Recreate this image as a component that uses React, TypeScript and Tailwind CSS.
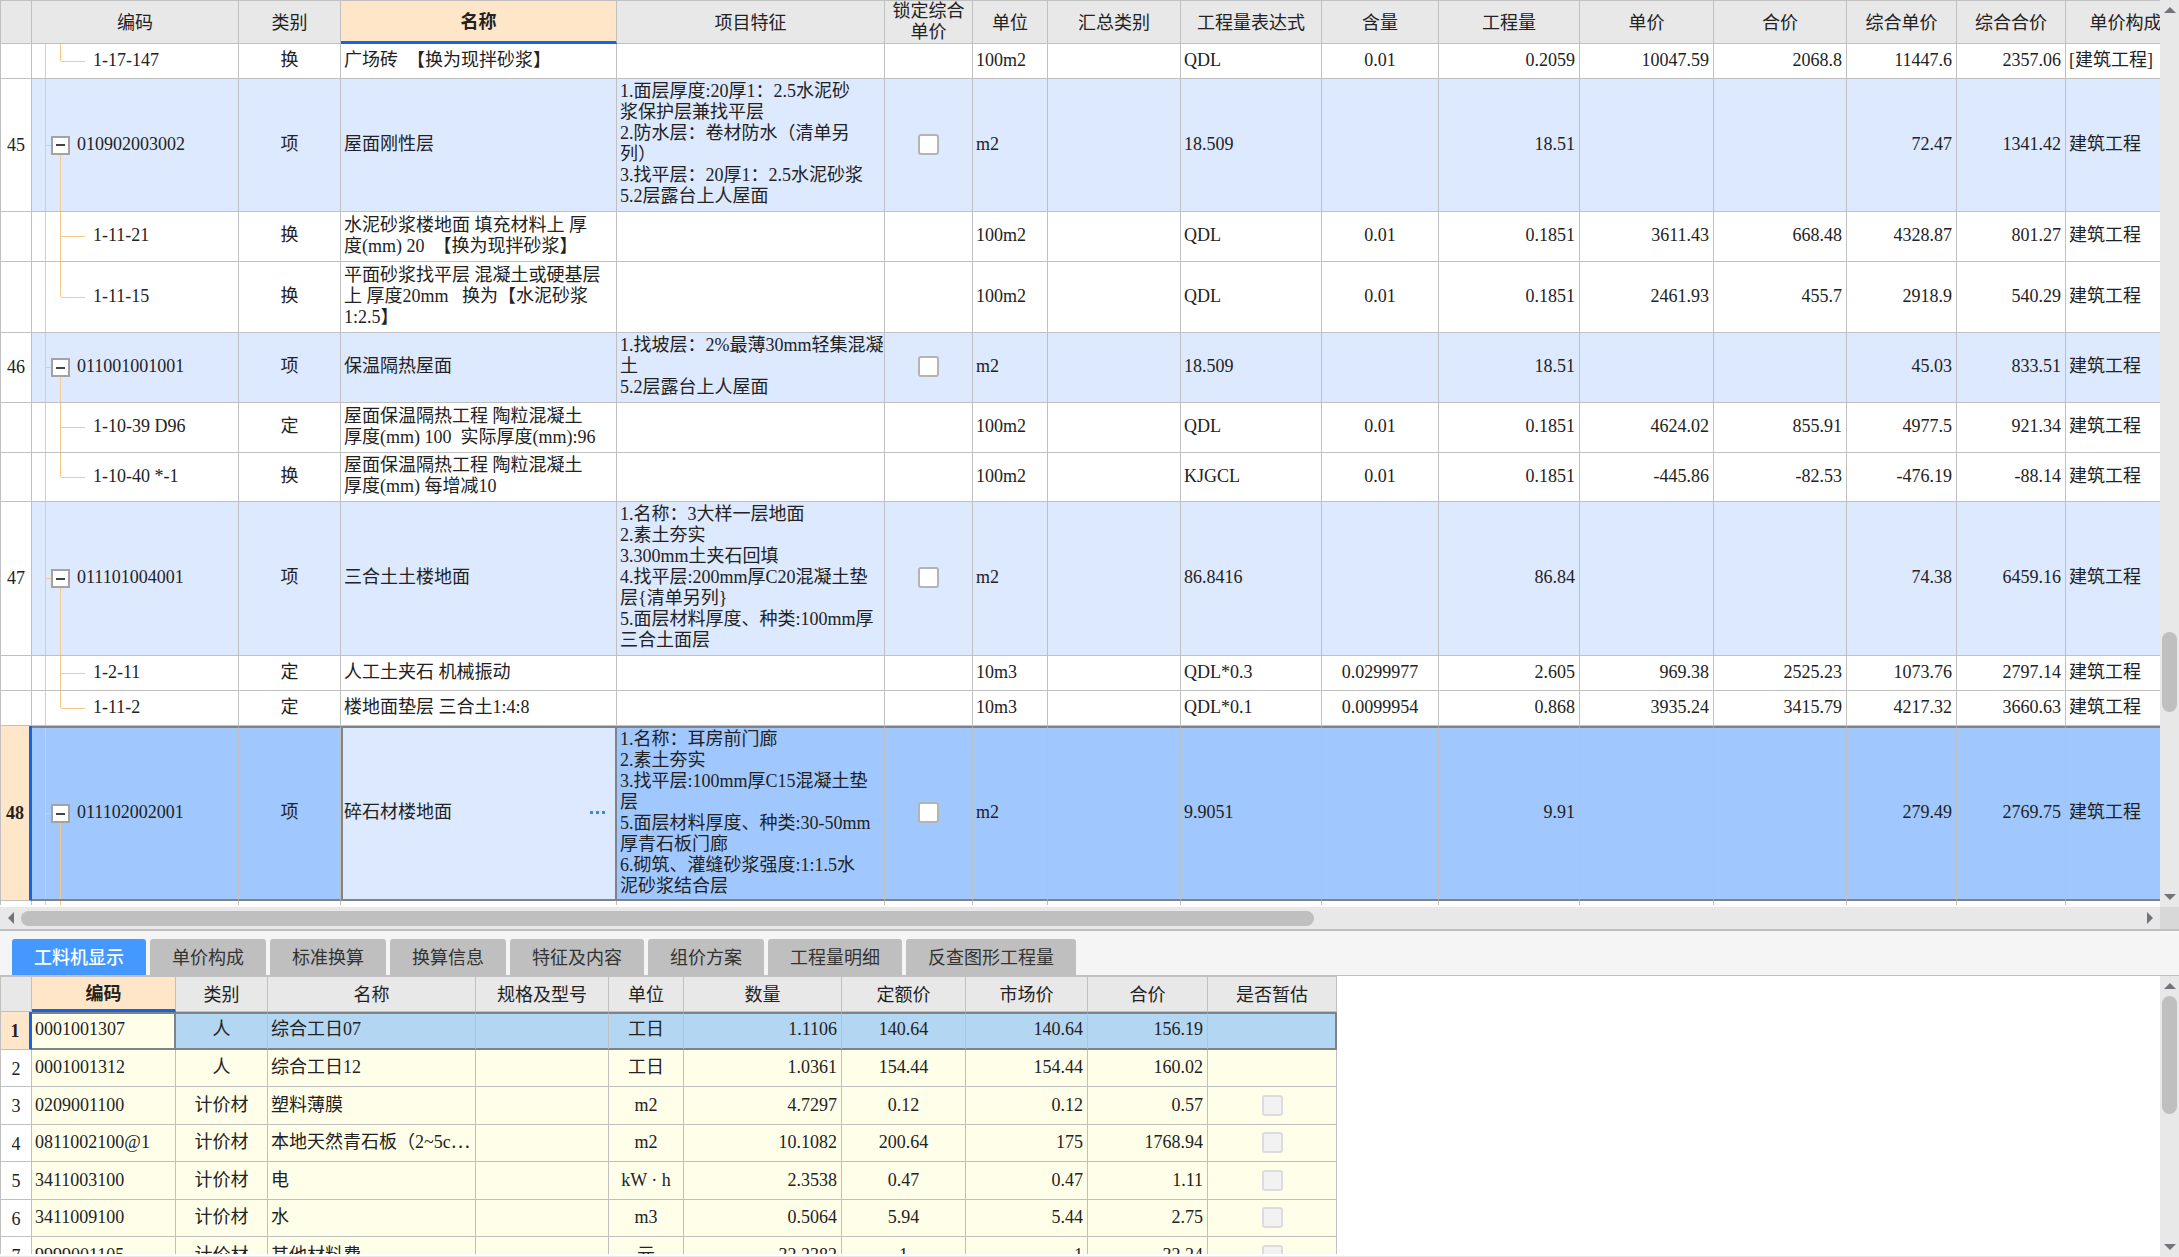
import { useState } from 'react';
import type { ReactNode } from 'react';
import { clsx } from 'clsx';

type Align = 'left' | 'center' | 'right';

interface Column {
  key: string;
  label: string;
  width: string;
  align: Align;
}

interface BillRow {
  no?: string;
  kind: 'item' | 'child' | 'last';
  height: string;
  code: string;
  type: string;
  name: string;
  feature?: string;
  unit: string;
  expr: string;
  content?: string;
  qty: string;
  price?: string;
  total?: string;
  compPrice: string;
  compTotal: string;
  fee: string;
  selected?: boolean;
}

const BILL_COLUMNS: Column[] = [
  { key: 'code', label: '编码', width: 'w-[207px]', align: 'left' },
  { key: 'type', label: '类别', width: 'w-[102px]', align: 'center' },
  { key: 'name', label: '名称', width: 'w-[276px]', align: 'left' },
  { key: 'feature', label: '项目特征', width: 'w-[268px]', align: 'left' },
  { key: 'lock', label: '锁定综合\n单价', width: 'w-[88px]', align: 'center' },
  { key: 'unit', label: '单位', width: 'w-[75px]', align: 'left' },
  { key: 'group', label: '汇总类别', width: 'w-[133px]', align: 'left' },
  { key: 'expr', label: '工程量表达式', width: 'w-[141px]', align: 'left' },
  { key: 'content', label: '含量', width: 'w-[117px]', align: 'center' },
  { key: 'qty', label: '工程量', width: 'w-[141px]', align: 'right' },
  { key: 'price', label: '单价', width: 'w-[134px]', align: 'right' },
  { key: 'total', label: '合价', width: 'w-[133px]', align: 'right' },
  { key: 'compPrice', label: '综合单价', width: 'w-[110px]', align: 'right' },
  { key: 'compTotal', label: '综合合价', width: 'w-[109px]', align: 'right' },
  { key: 'fee', label: '单价构成', width: 'w-[120px]', align: 'left' },
];

const BILL_ROWS: BillRow[] = [
  { kind: 'last', height: 'h-[35px]', code: '1-17-147', type: '换', name: '广场砖  【换为现拌砂浆】', unit: '100m2', expr: 'QDL', content: '0.01', qty: '0.2059', price: '10047.59', total: '2068.8', compPrice: '11447.6', compTotal: '2357.06', fee: '[建筑工程]' },
  { no: '45', kind: 'item', height: 'h-[133px]', code: '010902003002', type: '项', name: '屋面刚性层', feature: '1.面层厚度:20厚1：2.5水泥砂\n浆保护层兼找平层\n2.防水层：卷材防水（清单另\n列）\n3.找平层：20厚1：2.5水泥砂浆\n5.2层露台上人屋面', unit: 'm2', expr: '18.509', qty: '18.51', compPrice: '72.47', compTotal: '1341.42', fee: '建筑工程' },
  { kind: 'child', height: 'h-[50px]', code: '1-11-21', type: '换', name: '水泥砂浆楼地面 填充材料上 厚\n度(mm) 20  【换为现拌砂浆】', unit: '100m2', expr: 'QDL', content: '0.01', qty: '0.1851', price: '3611.43', total: '668.48', compPrice: '4328.87', compTotal: '801.27', fee: '建筑工程' },
  { kind: 'last', height: 'h-[71px]', code: '1-11-15', type: '换', name: '平面砂浆找平层 混凝土或硬基层\n上 厚度20mm   换为【水泥砂浆\n1:2.5】', unit: '100m2', expr: 'QDL', content: '0.01', qty: '0.1851', price: '2461.93', total: '455.7', compPrice: '2918.9', compTotal: '540.29', fee: '建筑工程' },
  { no: '46', kind: 'item', height: 'h-[70px]', code: '011001001001', type: '项', name: '保温隔热屋面', feature: '1.找坡层：2%最薄30mm轻集混凝\n土\n5.2层露台上人屋面', unit: 'm2', expr: '18.509', qty: '18.51', compPrice: '45.03', compTotal: '833.51', fee: '建筑工程' },
  { kind: 'child', height: 'h-[50px]', code: '1-10-39 D96', type: '定', name: '屋面保温隔热工程 陶粒混凝土\n厚度(mm) 100  实际厚度(mm):96', unit: '100m2', expr: 'QDL', content: '0.01', qty: '0.1851', price: '4624.02', total: '855.91', compPrice: '4977.5', compTotal: '921.34', fee: '建筑工程' },
  { kind: 'last', height: 'h-[49px]', code: '1-10-40 *-1', type: '换', name: '屋面保温隔热工程 陶粒混凝土\n厚度(mm) 每增减10', unit: '100m2', expr: 'KJGCL', content: '0.01', qty: '0.1851', price: '-445.86', total: '-82.53', compPrice: '-476.19', compTotal: '-88.14', fee: '建筑工程' },
  { no: '47', kind: 'item', height: 'h-[154px]', code: '011101004001', type: '项', name: '三合土土楼地面', feature: '1.名称：3大样一层地面\n2.素土夯实\n3.300mm土夹石回填\n4.找平层:200mm厚C20混凝土垫\n层{清单另列}\n5.面层材料厚度、种类:100mm厚\n三合土面层', unit: 'm2', expr: '86.8416', qty: '86.84', compPrice: '74.38', compTotal: '6459.16', fee: '建筑工程' },
  { kind: 'child', height: 'h-[35px]', code: '1-2-11', type: '定', name: '人工土夹石 机械振动', unit: '10m3', expr: 'QDL*0.3', content: '0.0299977', qty: '2.605', price: '969.38', total: '2525.23', compPrice: '1073.76', compTotal: '2797.14', fee: '建筑工程' },
  { kind: 'last', height: 'h-[35px]', code: '1-11-2', type: '定', name: '楼地面垫层 三合土1:4:8', unit: '10m3', expr: 'QDL*0.1', content: '0.0099954', qty: '0.868', price: '3935.24', total: '3415.79', compPrice: '4217.32', compTotal: '3660.63', fee: '建筑工程' },
  { no: '48', kind: 'item', height: 'h-[175px]', code: '011102002001', type: '项', name: '碎石材楼地面', feature: '1.名称：耳房前门廊\n2.素土夯实\n3.找平层:100mm厚C15混凝土垫\n层\n5.面层材料厚度、种类:30-50mm\n厚青石板门廊\n6.砌筑、灌缝砂浆强度:1:1.5水\n泥砂浆结合层', unit: 'm2', expr: '9.9051', qty: '9.91', compPrice: '279.49', compTotal: '2769.75', fee: '建筑工程', selected: true },
];

const TABS = ['工料机显示', '单价构成', '标准换算', '换算信息', '特征及内容', '组价方案', '工程量明细', '反查图形工程量'];

const DETAIL_COLUMNS: Column[] = [
  { key: 'code', label: '编码', width: 'w-[144px]', align: 'left' },
  { key: 'type', label: '类别', width: 'w-[92px]', align: 'center' },
  { key: 'name', label: '名称', width: 'w-[208px]', align: 'left' },
  { key: 'spec', label: '规格及型号', width: 'w-[133px]', align: 'left' },
  { key: 'unit', label: '单位', width: 'w-[75px]', align: 'center' },
  { key: 'qty', label: '数量', width: 'w-[158px]', align: 'right' },
  { key: 'quota', label: '定额价', width: 'w-[124px]', align: 'center' },
  { key: 'market', label: '市场价', width: 'w-[122px]', align: 'right' },
  { key: 'total', label: '合价', width: 'w-[120px]', align: 'right' },
  { key: 'estimate', label: '是否暂估', width: 'w-[129px]', align: 'center' },
];

const DETAIL_ROWS = [
  { code: '0001001307', type: '人', name: '综合工日07', unit: '工日', qty: '1.1106', quota: '140.64', market: '140.64', total: '156.19', estimate: false },
  { code: '0001001312', type: '人', name: '综合工日12', unit: '工日', qty: '1.0361', quota: '154.44', market: '154.44', total: '160.02', estimate: false },
  { code: '0209001100', type: '计价材', name: '塑料薄膜', unit: 'm2', qty: '4.7297', quota: '0.12', market: '0.12', total: '0.57', estimate: true },
  { code: '0811002100@1', type: '计价材', name: '本地天然青石板（2~5c⋯', unit: 'm2', qty: '10.1082', quota: '200.64', market: '175', total: '1768.94', estimate: true },
  { code: '3411003100', type: '计价材', name: '电', unit: 'kW · h', qty: '2.3538', quota: '0.47', market: '0.47', total: '1.11', estimate: true },
  { code: '3411009100', type: '计价材', name: '水', unit: 'm3', qty: '0.5064', quota: '5.94', market: '5.44', total: '2.75', estimate: true },
  { code: '9999001105', type: '计价材', name: '其他材料费', unit: '元', qty: '32.2382', quota: '1', market: '1', total: '32.24', estimate: true },
];

const alignClass: Record<Align, string> = {
  left: 'text-left',
  center: 'text-center',
  right: 'text-right',
};

function Arrow({ dir }: { dir: 'up' | 'down' | 'left' | 'right' }) {
  const points = {
    up: '6,0 12,6 0,6',
    down: '0,0 12,0 6,6',
    left: '6,0 6,12 0,6',
    right: '0,0 6,6 0,12',
  }[dir];
  const vertical = dir === 'up' || dir === 'down';
  return (
    <svg width={vertical ? 12 : 6} height={vertical ? 6 : 12} aria-hidden="true">
      <polygon points={points} fill="#73737a" />
    </svg>
  );
}

function VerticalScrollbar({ children }: { children: ReactNode }) {
  return (
    <div className="w-[19px] shrink-0 bg-[#e8e8e8] flex flex-col items-center">
      <button aria-label="向上滚动" className="h-5 w-full shrink-0 flex items-center justify-center">
        <Arrow dir="up" />
      </button>
      <div className="flex-1 min-h-0 w-full flex flex-col items-center">{children}</div>
      <button aria-label="向下滚动" className="h-5 w-full shrink-0 flex items-center justify-center">
        <Arrow dir="down" />
      </button>
    </div>
  );
}

function TreeCode({ row, open, onToggle }: { row: BillRow; open: boolean; onToggle: () => void }) {
  if (row.kind === 'item') {
    return (
      <div className="flex h-full items-stretch">
        <span className="w-[14px] border-r border-[#f6c88a]" />
        <span className="w-[5px] h-px self-center bg-[#f6c88a]" />
        <span className="w-[19px] flex flex-col items-center">
          <span className="flex-1" />
          <button
            aria-label={`${open ? '折叠' : '展开'} ${row.code}`}
            onClick={onToggle}
            className="w-[19px] h-[19px] bg-white border-2 border-[#a3a3a3] flex items-center justify-center"
          >
            <span className="w-[9px] h-[2px] bg-[#444444]" />
          </button>
          <span className="flex-1 w-px bg-[#f6c88a]" />
        </span>
        <span className="self-center ml-[7px] pb-[2px]">{row.code}</span>
      </div>
    );
  }
  return (
    <div className="flex h-full items-stretch">
      <span className="w-[14px] border-r border-[#f6c88a]" />
      <span className="w-[14px]" />
      <span className="w-px flex flex-col">
        <span className="flex-1 bg-[#f6c88a]" />
        <span className={clsx('flex-1', row.kind === 'child' && 'bg-[#f6c88a]')} />
      </span>
      <span className="w-6 h-px self-center bg-[#f6c88a]" />
      <span className="self-center ml-2 pb-[2px]">{row.code}</span>
    </div>
  );
}

function BillTable() {
  const [closed, setClosed] = useState<string[]>([]);
  const [locked, setLocked] = useState<string[]>([]);

  const toggle = (list: string[], code: string) =>
    list.includes(code) ? list.filter((c) => c !== code) : [...list, code];

  const renderCell = (row: BillRow, key: string) => {
    if (key === 'lock') {
      return row.kind === 'item' ? (
        <input
          type="checkbox"
          aria-label={`锁定综合单价 ${row.code}`}
          checked={locked.includes(row.code)}
          onChange={() => setLocked((prev) => toggle(prev, row.code))}
          className="appearance-none block mx-auto w-[21px] h-[21px] rounded-[3px] border-2 border-[#b4b4b4] bg-white checked:bg-[#4598ff]"
        />
      ) : null;
    }
    if (key === 'name' && row.selected) {
      return (
        <div className="flex items-center justify-between">
          <span>{row.name}</span>
          <button aria-label="更多" className="flex gap-[3px] mr-[10px]">
            <span className="w-[3px] h-[3px] bg-[#3f88d6]" />
            <span className="w-[3px] h-[3px] bg-[#3f88d6]" />
            <span className="w-[3px] h-[3px] bg-[#3f88d6]" />
          </button>
        </div>
      );
    }
    return row[key as keyof BillRow];
  };

  return (
    <table className="table-fixed w-full border-separate border-spacing-0">
      <colgroup>
        <col className="w-[32px]" />
        {BILL_COLUMNS.map((c) => <col key={c.key} className={c.width} />)}
      </colgroup>
      <thead>
        <tr className="h-11 bg-[#e8e8e8]">
          <th className="border border-[#c0c0c0]" />
          {BILL_COLUMNS.map((c) => (
            <th
              key={c.key}
              className={clsx(
                'border-t border-r border-[#c0c0c0] px-0 pb-0 whitespace-pre',
                c.key === 'lock' ? 'pt-0' : 'pt-[2px]',
                c.key === 'name' ? 'bg-[#ffe6c8] font-bold border-b-[3px] border-b-[#1565e0]' : 'font-normal border-b'
              )}
            >
              {c.label}
            </th>
          ))}
        </tr>
      </thead>
      <tbody>
        {BILL_ROWS.map((row) => (
          <tr key={row.code} className={clsx(row.height, row.selected ? 'bg-[#a0c8fe]' : row.kind === 'item' && 'bg-[#dde9fe]')}>
            <td
              className={clsx(
                'border-b border-l border-r border-[#c0c0c0] p-0 text-center',
                row.selected ? 'bg-[#ffe6c8] font-bold border-r-[3px] border-r-[#1565e0]' : 'bg-white'
              )}
            >
              {row.no}
            </td>
            {BILL_COLUMNS.map((c) => (
              <td
                key={c.key}
                className={clsx(
                  'border-r border-b whitespace-pre overflow-hidden border-[#c0c0c0]',
                  c.key === 'code' && clsx('p-0', row.height),
                  c.key !== 'code' && (row.selected ? 'pt-0 pb-[2px]' : 'pt-[2px] pb-1'),
                  c.align === 'center' && 'px-0',
                  c.align === 'right' && 'pl-0 pr-1',
                  c.align === 'left' && c.key !== 'code' && 'pr-0',
                  c.align === 'left' && c.key !== 'code' && (row.selected && c.key === 'name' ? 'pl-px' : 'pl-[3px]'),
                  alignClass[c.align],
                  row.selected && 'border-t-2 border-b-2 border-t-[#7f8387] border-b-[#7f8387]',
                  row.selected && c.key === 'name' && 'border-l-2 border-r-2 border-l-[#7f8387] border-r-[#7f8387] bg-[#dde9fe]'
                )}
              >
                {c.key === 'code' ? (
                  <TreeCode
                    row={row}
                    open={!closed.includes(row.code)}
                    onToggle={() => setClosed((prev) => toggle(prev, row.code))}
                  />
                ) : (
                  renderCell(row, c.key)
                )}
              </td>
            ))}
          </tr>
        ))}
        {/* top edge of the next row */}
        <tr className="h-[35px]">
          <td className="border-l border-r border-[#c0c0c0]" />
          {BILL_COLUMNS.map((c) => (
            <td key={c.key} className="h-[35px] border-r border-[#c0c0c0] p-0">
              {c.key === 'code' && (
                <div className="flex h-full">
                  <span className="w-[14px] border-r border-[#f6c88a]" />
                  <span className="w-[15px] border-r border-[#f6c88a]" />
                </div>
              )}
            </td>
          ))}
        </tr>
      </tbody>
    </table>
  );
}

function DetailTable() {
  return (
    <table className="table-fixed w-[1337px] border-separate border-spacing-0">
      <colgroup>
        <col className="w-[32px]" />
        {DETAIL_COLUMNS.map((c) => <col key={c.key} className={c.width} />)}
      </colgroup>
      <thead>
        <tr className="h-9 bg-[#e8e8e8]">
          <th className="border border-[#c0c0c0]" />
          {DETAIL_COLUMNS.map((c) => (
            <th
              key={c.key}
              className={clsx(
                'border-t border-r border-[#c0c0c0] px-0 pt-[2px] pb-0',
                c.key === 'code' ? 'bg-[#ffe6c8] font-bold border-b-[3px] border-b-[#1565e0]' : 'font-normal border-b'
              )}
            >
              {c.label}
            </th>
          ))}
        </tr>
      </thead>
      <tbody>
        {DETAIL_ROWS.map((row, idx) => {
          const selected = idx === 0;
          return (
            <tr
              key={row.code}
              className={clsx(
                idx % 2 === 0 ? 'h-[38px]' : 'h-[37px]',
                selected ? 'bg-[#b3d6f2]' : 'bg-[#ffffe9]'
              )}
            >
              <td
                className={clsx(
                  'border-b border-l border-r border-[#c0c0c0] px-0 pt-[2px] pb-0 text-center',
                  selected ? 'bg-[#ffe6c8] font-bold border-r-[3px] border-r-[#1565e0]' : 'bg-white'
                )}
              >
                {idx + 1}
              </td>
              {DETAIL_COLUMNS.map((c) => (
                <td
                  key={c.key}
                  className={clsx(
                    'border-r border-b border-[#c0c0c0] pt-0 whitespace-pre overflow-hidden',
                    selected ? 'pb-[3px]' : 'pb-px',
                    c.align === 'left' && 'pl-[3px] pr-0',
                    c.align === 'center' && 'px-0',
                    c.align === 'right' && 'pl-0 pr-1',
                    alignClass[c.align],
                    selected && 'border-t-2 border-b-2 border-t-[#7f8387] border-b-[#7f8387]',
                    selected && c.key === 'code' && 'border-r-2 border-r-[#7f8387] bg-[#ffffe9]',
                    selected && c.key === 'estimate' && 'border-r-2 border-r-[#7f8387]'
                  )}
                >
                  {c.key === 'estimate' ? (
                    row.estimate && (
                      <input
                        type="checkbox"
                        disabled
                        aria-label={`是否暂估 ${row.code}`}
                        className="appearance-none block mx-auto w-[21px] h-[21px] rounded-[3px] border-2 border-[#dcdcdc] bg-[#f2f2f2]"
                      />
                    )
                  ) : (
                    row[c.key as keyof typeof row]
                  )}
                </td>
              ))}
            </tr>
          );
        })}
      </tbody>
    </table>
  );
}

export default function App() {
  const [activeTab, setActiveTab] = useState(TABS[0]);

  return (
    <div className="h-screen flex flex-col overflow-hidden bg-white text-[#222222] text-lg leading-[21px] font-['Liberation_Serif','Noto_Sans_CJK_SC',sans-serif]">
      {/* Bill of quantities */}
      <div className="flex flex-1 min-h-0">
        <div className="flex-1 min-w-0 flex flex-col">
          <div className="flex-1 min-h-0 overflow-hidden">
            <BillTable />
          </div>
          <div className="h-[2px] shrink-0" />
        </div>
        <VerticalScrollbar>
          <span className="flex-[7]" />
          <span className="w-[15px] h-20 rounded-full bg-[#bfbfbf]" />
          <span className="flex-[2]" />
        </VerticalScrollbar>
      </div>
      <div className="h-[22px] shrink-0 flex bg-[#e8e8e8]">
        <button aria-label="向左滚动" className="w-[21px] flex items-center justify-center">
          <Arrow dir="left" />
        </button>
        <div className="flex-1 flex items-center">
          <span className="w-[61%] h-[15px] rounded-full bg-[#bfbfbf]" />
        </div>
        <button aria-label="向右滚动" className="w-5 flex items-center justify-center">
          <Arrow dir="right" />
        </button>
        <span className="w-[19px] bg-[#d8d8d8]" />
      </div>
      <div className="h-[2px] shrink-0 bg-[#c0c0c0]" />

      {/* Detail tabs */}
      <div role="tablist" className="h-[45px] shrink-0 flex items-end gap-1 pl-3 bg-[#f5f5f5] border-b border-[#c0c0c0]">
        {TABS.map((tab) => (
          <button
            key={tab}
            role="tab"
            aria-selected={tab === activeTab}
            onClick={() => setActiveTab(tab)}
            className={clsx(
              'h-9 px-[22px] pt-[2px] rounded-t-[3px] whitespace-nowrap',
              tab === activeTab ? 'bg-[#4598ff] text-white font-medium' : 'bg-[#bfbfbf] text-[#333333]'
            )}
          >
            {tab}
          </button>
        ))}
      </div>

      {/* Detail rows */}
      <div className="flex h-[281px] shrink-0">
        <div className="flex-1 min-w-0 flex flex-col">
          <div className="flex-1 min-h-0 overflow-hidden">
            <DetailTable />
          </div>
          <div className="h-[3px] shrink-0 border-b border-[#e8e8e8]" />
        </div>
        <VerticalScrollbar>
          <span className="w-[15px] h-[118px] rounded-full bg-[#bfbfbf]" />
        </VerticalScrollbar>
      </div>
    </div>
  );
}
